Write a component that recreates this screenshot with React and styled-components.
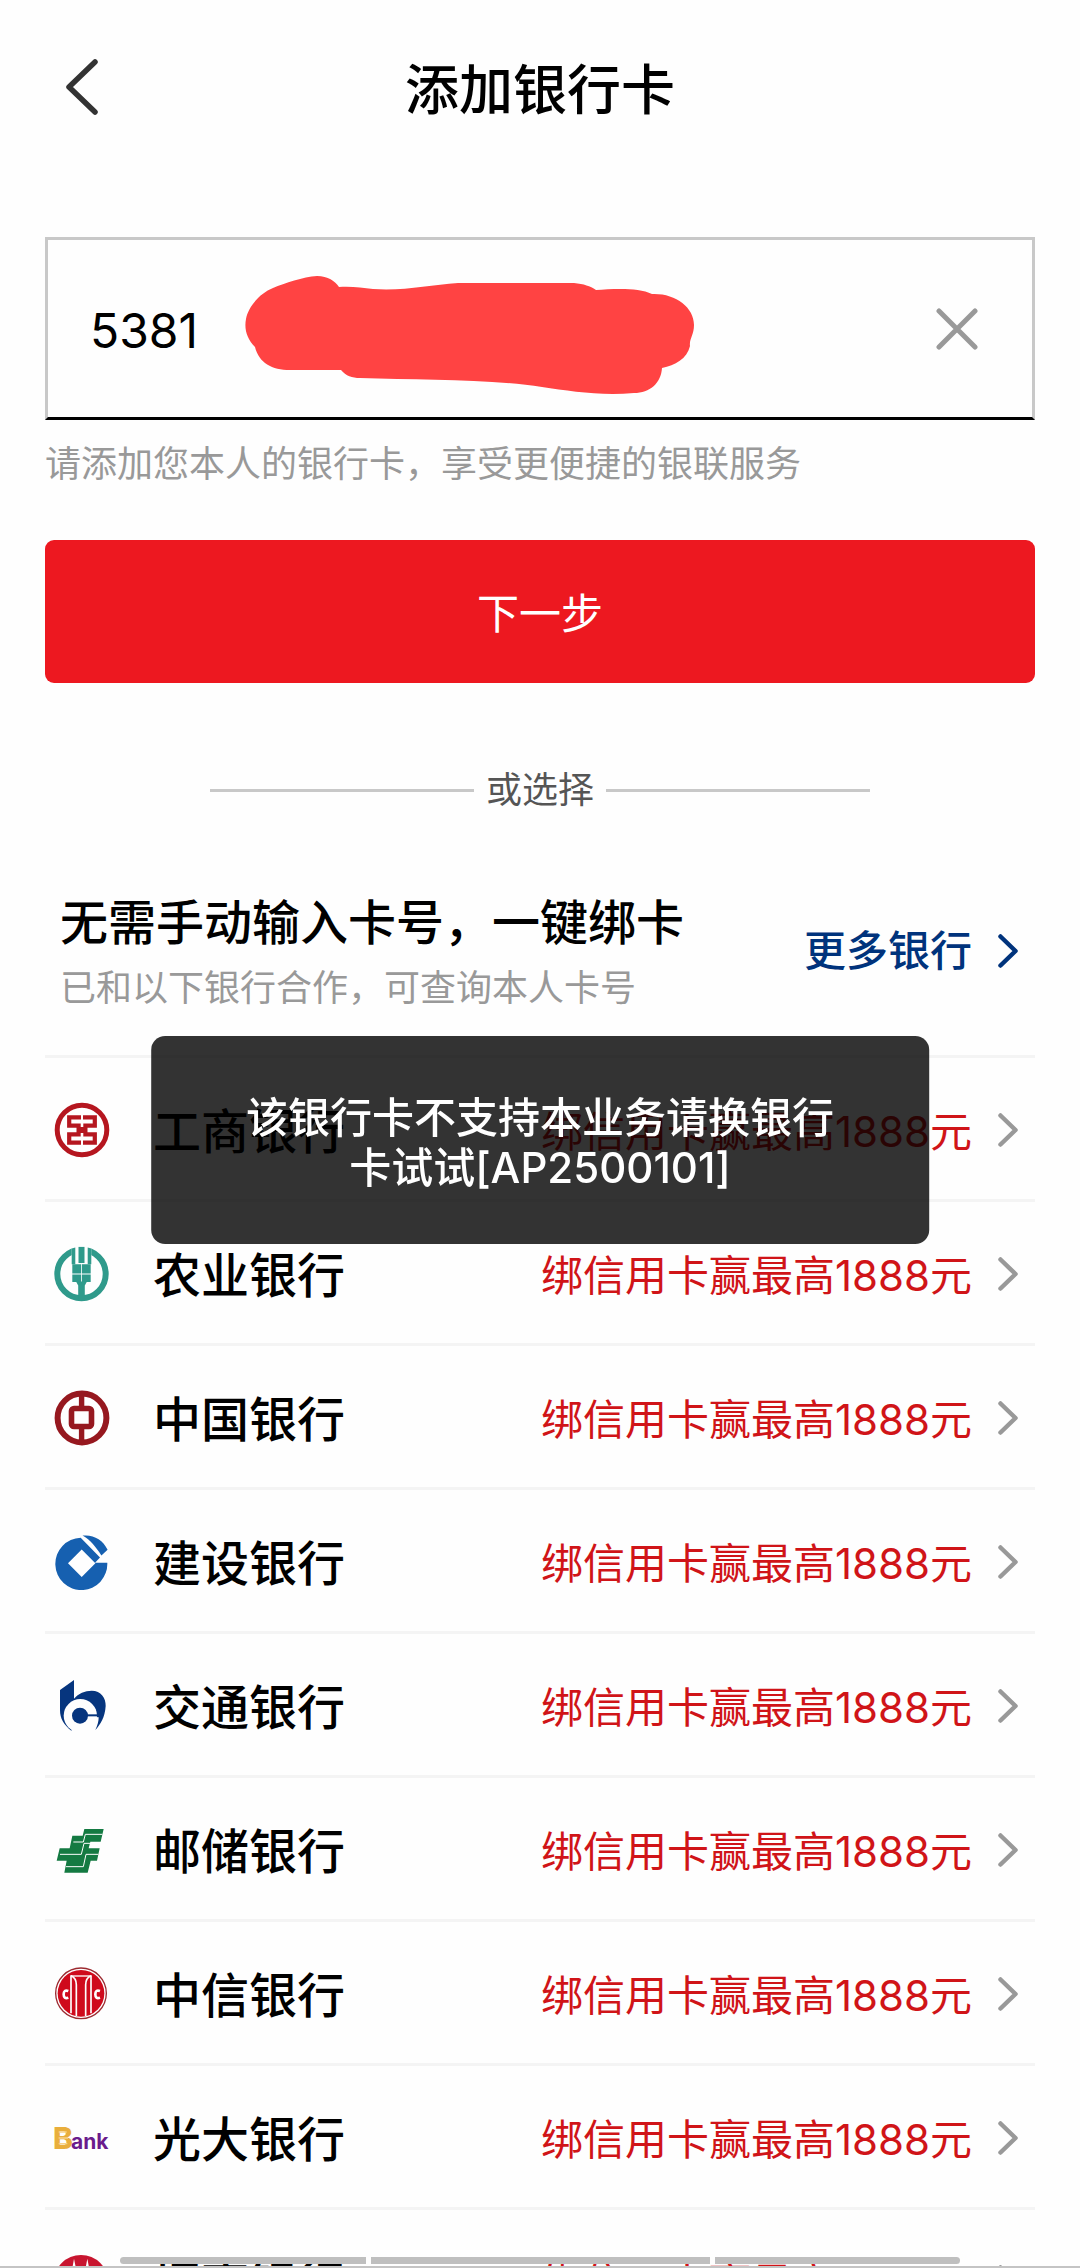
import React, { useState } from 'react'
import styled, { createGlobalStyle } from 'styled-components'

const GlobalStyle = createGlobalStyle`
*, *::before, *::after{
  box-sizing: border-box;
}
body{
  margin: 0;
  background: #fefefe;
  color: #000;
  font-family: 'Inter', 'Noto Sans CJK SC', sans-serif;
}
h1, h2, p, ul{
  margin: 0;
  padding: 0;
}
button, input{
  font-family: inherit;
}
`

const Page = styled.div`
height: 100vh;
overflow: hidden;
`

const Header = styled.header`
display: grid;
grid-template-columns: 100px 1fr 100px;
align-items: center;
height: 174px;
padding: 0 32px;
`

const IconButton = styled.button`
display: flex;
align-items: center;
justify-content: center;
width: ${props => props.size};
height: ${props => props.size};
padding: 0;
border: none;
background: none;
cursor: pointer;
`

const Title = styled.h1`
padding-top: 8px;
font-size: 54px;
font-weight: 500;
line-height: 80px;
text-align: center;
`

const Main = styled.main`
padding: 63px 45px 0;
`

const CardField = styled.div`
position: relative;
display: flex;
align-items: center;
height: 183px;
padding: 0 31px 0 42px;
border: 3px solid #c8c8c8;
border-bottom-color: #000;
`

const CardInput = styled.input`
flex: 1;
min-width: 0;
padding: 4px 0 0;
border: none;
outline: none;
background: none;
font-size: 48px;
line-height: 72px;
color: #000;
`

const Scribble = styled.svg`
position: absolute;
left: 196px;
top: 34px;
width: 454px;
height: 122px;
`

const Hint = styled.label`
display: block;
margin-top: 18px;
font-size: 36px;
line-height: 52px;
color: #999;
`

const NextButton = styled.button`
display: block;
width: 100%;
height: 143px;
margin-top: 50px;
padding: 0 0 2px;
border: none;
border-radius: 9px;
background: #ed1820;
color: #fff;
font-size: 42px;
cursor: pointer;
`

const Divider = styled.div`
display: flex;
align-items: center;
gap: 12px;
margin-top: 81px;
padding: 0 165px;
font-size: 36px;
line-height: 52px;
color: #555;

&::before, &::after{
  content: '';
  flex: 1;
  height: 3px;
  background: #c8c8c8;
}
`

const SectionHead = styled.div`
display: flex;
justify-content: space-between;
align-items: center;
padding: 72px 17px 41px 15px;
`

const SectionTitle = styled.h2`
font-size: 48px;
font-weight: 500;
line-height: 70px;
`

const SectionNote = styled.p`
margin-top: 4px;
font-size: 36px;
line-height: 52px;
color: #999;
`

const MoreLink = styled.a`
display: flex;
align-items: center;
gap: 26px;
font-size: 42px;
font-weight: 500;
line-height: 60px;
color: #00337c;
text-decoration: none;
`

const BankList = styled.ul`
list-style: none;
`

const BankItem = styled.li`
border-top: 3px solid #f4f4f4;
`

const BankLink = styled.a`
display: flex;
align-items: center;
height: 141px;
padding: 2px 17px 0 9px;
color: #000;
text-decoration: none;
`

const BankLogo = styled.svg`
width: 56px;
height: 56px;
margin-right: 43px;
`

const BankName = styled.span`
flex: 1;
padding-top: 4px;
font-size: 48px;
font-weight: 500;
line-height: 70px;
`

const Promo = styled.span`
margin-right: 26px;
padding-top: 4px;
font-size: 42px;
line-height: 60px;
color: #d01418;
`

const Toast = styled.div`
position: fixed;
top: 1036px;
left: 50%;
transform: translateX(-50%);
display: flex;
align-items: center;
width: 72%;
height: 208px;
padding: 6px 94px 0;
border-radius: 14px;
background: rgba(0,0,0,0.8);
color: #fff;
font-size: 42px;
font-weight: 500;
line-height: 50px;
text-align: center;
`

const BottomBar = styled.div`
position: fixed;
left: 0;
right: 0;
bottom: 0;
display: flex;
gap: 5px;
height: 11px;
padding: 0 11.11%;
border-bottom: 2px solid #c4c4c4;
`

const Segment = styled.span`
flex: ${props => props.grow};
height: 7px;
background: #bfbfbf;

&:first-child{
  border-radius: 4px 0 0 4px;
}
&:last-child{
  border-radius: 0 4px 4px 0;
}
`

const Chevron = ({ color }) => (
  <svg width="20" height="34" viewBox="0 0 20 34" fill="none" stroke={color} strokeWidth="4.5" strokeLinecap="round" strokeLinejoin="round" aria-hidden="true">
    <path d="M2.5 2.5L17.5 17L2.5 31.5" />
  </svg>
)

const IcbcLogo = () => (
  <BankLogo viewBox="0 0 56 56" fill="none" stroke="#b5161f" aria-hidden="true">
    <circle cx="28" cy="28" r="24.8" strokeWidth="5" />
    <g strokeWidth="4.2">
      <path d="M27 15.4H15.2V23.6H24.6V32.4H15.2V40.6H27" />
      <path d="M29 15.4H40.8V23.6H31.4V32.4H40.8V40.6H29" />
      <path d="M24 28H32" strokeWidth="6" />
    </g>
  </BankLogo>
)

const AbcLogo = () => (
  <BankLogo viewBox="0 0 56 56" aria-hidden="true">
    <circle cx="27.5" cy="28" r="24.2" fill="none" stroke="#2f9a8b" strokeWidth="6" />
    <path d="M17.7 0H37.3V20H17.7Z" fill="#fefefe" />
    <path d="M17.7 2.5L21.3 1.4V18.3H17.7ZM33.7 1.4L37.3 2.5V18.3H33.7Z" fill="#2f9a8b" />
    <path d="M24.5 .9H30.5V17H24.5Z" fill="#2f9a8b" />
    <path d="M18.3 18.3H27.1V27.6H18.3ZM27.9 18.3H36.7V27.6H27.9ZM18.3 28.4H27.1V36H18.3ZM27.9 28.4H36.7V36H27.9Z" fill="#2f9a8b" />
    <path d="M22 35.5H33L30.8 39.5V53H24.2V39.5Z" fill="#2f9a8b" />
  </BankLogo>
)

const BocLogo = () => (
  <BankLogo viewBox="0 0 56 56" fill="none" stroke="#96181f" aria-hidden="true">
    <circle cx="28" cy="28" r="24.4" strokeWidth="6" />
    <rect x="17.5" y="18.5" width="20" height="18" rx="2.5" strokeWidth="5.6" />
    <path d="M27.6 4V17M27.6 38V52" strokeWidth="5.4" />
  </BankLogo>
)

const CcbLogo = () => (
  <BankLogo viewBox="0 0 56 56" fill="#1660b0" aria-hidden="true">
    <path fillRule="evenodd" d="M26.7 3.7L46 23.5L41 28.7H53.3A26 26.2 0 1 1 26.7 3.7ZM27.7 15.6L14 29.3L27.7 43L41.4 29.3Z" />
    <path d="M28.5 1.6C39 .2 49 5.5 53.6 15.8L47.4 21.4C42 13.5 36.5 6 28.5 1.6Z" />
  </BankLogo>
)

const BocomLogo = () => (
  <BankLogo viewBox="27 24 168 168" fill="#06357e" aria-hidden="true">
    <path d="M45 60L87 30V86C100 70 120 62 140 62C168 62 183 84 182 108C180 142 166 164 151 180C158 166 161 154 161 142L106 137L79 182C56 164 45 146 45 120Z" />
    <circle cx="106" cy="137" r="50" fill="#fefefe" />
    <circle cx="105" cy="137" r="24" />
    <path d="M120 133H160V139H120Z" />
  </BankLogo>
)

const PsbcLogo = () => (
  <BankLogo viewBox="72 546 168 168" aria-hidden="true">
    <path fill="#147a42" d="M163 567H221L212 605H181L176 625H209L201 662H182L173 698H103L110 662H80L89 625H119L127 587H158Z" />
    <g fill="none" stroke="#fefefe" strokeWidth="3">
      <path d="M130 606H160L166 583H217" />
      <path d="M90 643H154L162 610H180" />
      <path d="M108 680H160L168 643H205" />
    </g>
  </BankLogo>
)

const CiticLogo = () => (
  <BankLogo viewBox="72 108 168 168" aria-hidden="true">
    <circle cx="153" cy="190" r="76" fill="#fefefe" stroke="#9c2a30" strokeWidth="4" />
    <circle cx="153" cy="190" r="70" fill="#cf0a1c" />
    <g fill="none" stroke="#fefefe" strokeWidth="5">
      <path d="M123 136V250M183 136V250" />
      <path d="M123 137Q139 144 139 164V258M183 137Q167 144 167 164V258" />
      <path d="M123 138H183" strokeWidth="4" />
      <path d="M115 183Q101 178 101 193Q101 208 115 203M210 183Q196 178 196 193Q196 208 210 203" strokeWidth="8" />
    </g>
  </BankLogo>
)

const CebLogo = () => (
  <BankLogo viewBox="72 540 168 168" fontFamily="Inter, sans-serif" fontWeight="800" aria-hidden="true">
    <text x="69" y="657" fontSize="90" fill="#e9ae3c">B</text>
    <path d="M86 606H110M86 624H114M86 641H112" stroke="#f6d28a" strokeWidth="4" />
    <text x="123" y="657" fontSize="63" fontWeight="700" fill="#6a1b8c">ank</text>
  </BankLogo>
)

const CmbLogo = () => (
  <BankLogo viewBox="72 972 168 168" aria-hidden="true">
    <circle cx="153" cy="1057" r="82" fill="#c8152f" />
    <path fill="#fefefe" d="M132 986L145 1050H160L172 986L196 1110H110Z" />
  </BankLogo>
)

const banks = [
  { name: '工商银行', Logo: IcbcLogo },
  { name: '农业银行', Logo: AbcLogo },
  { name: '中国银行', Logo: BocLogo },
  { name: '建设银行', Logo: CcbLogo },
  { name: '交通银行', Logo: BocomLogo },
  { name: '邮储银行', Logo: PsbcLogo },
  { name: '中信银行', Logo: CiticLogo },
  { name: '光大银行', Logo: CebLogo },
  { name: '招商银行', Logo: CmbLogo },
]

const App = () => {

  const [number, setNumber] = useState('5381')

  return (
    <Page>
      <GlobalStyle />
      <Header>
        <IconButton size="100px" aria-label="返回">
          <svg width="34" height="56" viewBox="0 0 34 56" fill="none" stroke="#333" strokeWidth="5.5" strokeLinecap="round" strokeLinejoin="round">
            <path d="M30 3L4 28L30 53" />
          </svg>
        </IconButton>
        <Title>添加银行卡</Title>
      </Header>
      <Main>
        <CardField>
          <CardInput id="card" value={number} onChange={e => setNumber(e.target.value)} />
          <Scribble viewBox="244 273 454 122" aria-hidden="true">
            <path fill="#ff4343" d="M273 287C285 282 303 276 317 275C328 275 335 280 339 286C352 285 362 287 373 288C405 290 430 284 458 282H574C584 283 590 285 596 289C612 288 638 286 652 293C675 292 694 306 694 324C694 334 689 338 690 345C687 358 675 364 662 367C661 382 650 392 634 392C600 395 570 390 542 386C490 378 420 379 360 377C352 377 346 375 341 369H290C272 369 259 362 255 346C247 338 244 328 246 318C248 306 260 292 273 287Z" />
          </Scribble>
          <IconButton size="88px" aria-label="清除" onClick={() => setNumber('')}>
            <svg width="42" height="42" viewBox="0 0 42 42" stroke="#999" strokeWidth="5" strokeLinecap="round">
              <path d="M3 3L39 39M39 3L3 39" />
            </svg>
          </IconButton>
        </CardField>
        <Hint htmlFor="card">请添加您本人的银行卡，享受更便捷的银联服务</Hint>
        <NextButton>下一步</NextButton>
        <Divider>或选择</Divider>
        <SectionHead>
          <div>
            <SectionTitle>无需手动输入卡号，一键绑卡</SectionTitle>
            <SectionNote>已和以下银行合作，可查询本人卡号</SectionNote>
          </div>
          <MoreLink href="#">更多银行 <Chevron color="#00337c" /></MoreLink>
        </SectionHead>
        <BankList>
          {banks.map(({ name, Logo }) => (
            <BankItem key={name}>
              <BankLink href="#">
                <Logo />
                <BankName>{name}</BankName>
                <Promo>绑信用卡赢最高1888元</Promo>
                <Chevron color="#999" />
              </BankLink>
            </BankItem>
          ))}
        </BankList>
      </Main>
      <Toast role="alert">该银行卡不支持本业务请换银行卡试试[AP2500101]</Toast>
      <BottomBar>
        <Segment grow="246" />
        <Segment grow="339" />
        <Segment grow="245" />
      </BottomBar>
    </Page>
  )
}

export default App
